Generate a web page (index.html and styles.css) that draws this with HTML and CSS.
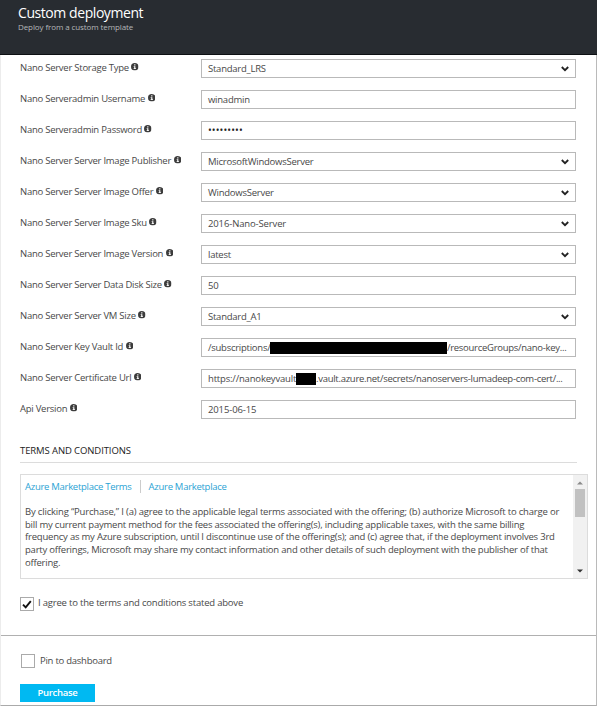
FILE: index.html
```
<!DOCTYPE html>
<html lang="en">
<head>
<meta charset="utf-8">
<title>Custom deployment</title>
<link rel="stylesheet" href="styles.css">
</head>
<body>
<svg width="0" height="0" class="defs">
  <symbol id="info" viewBox="0 0 14 14"><circle cx="7" cy="7" r="7" fill="#3c3c3c"/><path d="M6 2.5h2.2v2H6zM5 6h3.2v4H9.3v1.4H4.9V10H6V7.3H5z" fill="#fff"/></symbol>
  <symbol id="chev" viewBox="0 0 8 6"><path d="M.8 1 4 4.2 7.2 1" fill="none" stroke="#222" stroke-width="1.8"/></symbol>
</svg>
<div class="blade">
  <header class="head">
    <h1>Custom deployment</h1>
    <p>Deploy from a custom template</p>
  </header>
  <main class="form">
    <div class="row"><label>Nano Server Storage Type<svg class="info"><use href="#info"/></svg></label><div class="field"><span>Standard_LRS</span><svg class="chev"><use href="#chev"/></svg></div></div>
    <div class="row"><label>Nano Serveradmin Username<svg class="info"><use href="#info"/></svg></label><div class="field"><span>winadmin</span></div></div>
    <div class="row"><label>Nano Serveradmin Password<svg class="info"><use href="#info"/></svg></label><div class="field"><span class="dots">•••••••••</span></div></div>
    <div class="row"><label>Nano Server Server Image Publisher<svg class="info"><use href="#info"/></svg></label><div class="field"><span>MicrosoftWindowsServer</span><svg class="chev"><use href="#chev"/></svg></div></div>
    <div class="row"><label>Nano Server Server Image Offer<svg class="info"><use href="#info"/></svg></label><div class="field"><span>WindowsServer</span><svg class="chev"><use href="#chev"/></svg></div></div>
    <div class="row"><label>Nano Server Server Image Sku<svg class="info"><use href="#info"/></svg></label><div class="field"><span class="digits">2016-Nano-Server</span><svg class="chev"><use href="#chev"/></svg></div></div>
    <div class="row"><label>Nano Server Server Image Version<svg class="info"><use href="#info"/></svg></label><div class="field"><span>latest</span><svg class="chev"><use href="#chev"/></svg></div></div>
    <div class="row"><label>Nano Server Server Data Disk Size<svg class="info"><use href="#info"/></svg></label><div class="field"><span class="digits">50</span></div></div>
    <div class="row"><label>Nano Server Server VM Size<svg class="info"><use href="#info"/></svg></label><div class="field"><span>Standard_A1</span><svg class="chev"><use href="#chev"/></svg></div></div>
    <div class="row"><label>Nano Server Key Vault Id<svg class="info"><use href="#info"/></svg></label><div class="field"><span class="pre-sub">/subscriptions/</span><i class="mask mask-long"></i><span class="post">/resourceGroups/nano-key...</span></div></div>
    <div class="row"><label>Nano Server Certificate Url<svg class="info"><use href="#info"/></svg></label><div class="field"><span class="pre-url">https://nanokeyvault</span><i class="mask mask-short"></i><span class="post">.vault.azure.net/secrets/nanoservers-lumadeep-com-cert/...</span></div></div>
    <div class="row"><label>Api Version<svg class="info"><use href="#info"/></svg></label><div class="field"><span class="digits">2015-06-15</span></div></div>

    <h2>TERMS AND CONDITIONS</h2>
    <section class="terms">
      <div class="copy">
        <nav><a class="first">Azure Marketplace Terms</a><a>Azure Marketplace</a></nav>
        <p><span class="wide">By clicking “Purchase,” I (a) agree to the applicable legal terms associated with the offering; (b) authorize Microsoft to charge or</span><br>
        bill my current payment method for the fees associated the offering(s), including applicable taxes, with the same billing<br>
        frequency as my Azure subscription, until I discontinue use of the offering(s); and (c) agree that, if the deployment involves 3rd<br>
        party offerings, Microsoft may share my contact information and other details of such deployment with the publisher of that<br>
        offering.</p>
      </div>
      <div class="scroll">
        <svg class="up" viewBox="0 0 6 4"><path d="M0 3.5 3 .5 6 3.5z"/></svg>
        <div class="thumb"></div>
        <svg class="down" viewBox="0 0 6 4"><path d="M0 .5 3 3.5 6 .5z"/></svg>
      </div>
    </section>
    <div class="check agree"><span class="box"><svg viewBox="0 0 10 9"><path d="M1 4.6 3.7 7.4 8.8 1.2" fill="none" stroke="#111" stroke-width="1.9"/></svg></span><span class="check-text">I agree to the terms and conditions stated above</span></div>
  </main>
  <footer class="foot">
    <div class="check pin"><span class="box"></span><span class="check-text">Pin to dashboard</span></div>
    <button class="buy">Purchase</button>
  </footer>
</div>
</body>
</html>
```
FILE: styles.css
```
* { box-sizing: border-box; }
body { margin: 0; background: #fff; color: #484848; font: 9.5px/13px "Open Sans", "Noto Sans", sans-serif; }
.defs { position: absolute; }
.blade { width: 597px; height: 706px; display: flex; flex-direction: column; border-right: 1px solid #bababa; border-left: 1px solid #ececec; border-bottom: 1px solid #aaa; white-space: nowrap; }
.head { height: 55px; margin: 0 -1px; padding: 4px 0 0 18px; background: #282c31; border-bottom: 1px solid #0d1013; color: #fff; }
h1 { margin: 0; font-size: 14px; line-height: 17px; font-weight: 400; letter-spacing: -0.43px; }
.head p { margin: 0; font-size: 8px; line-height: 11px; color: #b5b7b9; letter-spacing: -0.1px; }
.form { height: 580px; padding: 4px 0 0 19px; }
.row { display: flex; height: 31px; }
label { width: 181px; height: 17px; display: flex; align-items: center; letter-spacing: -0.25px; }
.info { width: 7.5px; height: 7.5px; margin: -1px 0 0 2.5px; }
.field { width: 375px; height: 19px; padding: 0 6px; display: flex; align-items: center; border: 1px solid #b9b9b9; letter-spacing: -0.24px; }
.chev { width: 8px; height: 6px; margin: 1px 0 0 auto; }
.digits { letter-spacing: -0.13px; }
.dots { color: #222; font-size: 10px; letter-spacing: 0.1px; }
.pre-sub { width: 62px; letter-spacing: -0.25px; }
.pre-url { width: 88px; letter-spacing: -0.18px; }
.post { letter-spacing: -0.28px; }
.mask { flex: none; background: #000; }
.mask-long { width: 177px; height: 12px; margin-top: 1px; }
.mask-short { width: 20px; height: 12px; }
h2 { width: 557px; height: 19px; margin: 13px 0 11px; border-bottom: 1px solid #dcdcdc; font-size: 9.5px; line-height: 13px; font-weight: 400; color: #222; letter-spacing: -0.1px; }
.terms { width: 568px; height: 105px; display: flex; justify-content: space-between; border: 1px solid #dcdcdc; }
.copy { padding: 5px 0 0 4px; }
nav { display: flex; height: 13px; }
nav a { color: #2ba3d4; letter-spacing: -0.28px; }
nav .first { margin-right: 8px; padding-right: 8px; border-right: 1px solid #ccc; }
.copy p { margin: 13px 0 0; line-height: 12.7px; letter-spacing: -0.21px; }
.wide { letter-spacing: -0.18px; }
.scroll { width: 14px; display: flex; flex-direction: column; align-items: center; background: #f1f1f1; }
.up { width: 6px; height: 4px; margin: 6px 0 4px; fill: #8a8a8a; }
.thumb { width: 10px; height: 28px; background: #c1c1c1; }
.down { width: 6px; height: 4px; margin: auto 0 5px; fill: #333; }
.check { display: flex; align-items: center; letter-spacing: -0.2px; }
.box { width: 14px; height: 14px; display: flex; align-items: center; justify-content: center; border: 1px solid #aaa; }
.box svg { width: 10px; height: 9px; }
.check-text { margin: -2px 0 0 5px; }
.agree { margin-top: 18px; }
.agree .check-text { margin: -3px 0 0 4px; }
.foot { flex: 1; padding: 18px 0 0 19px; border-top: 1px solid #b0b0b0; }
.pin { margin-left: 1px; letter-spacing: -0.25px; }
.buy { display: block; width: 75px; height: 18px; margin-top: 16px; padding: 0; border: 0; background: #00b9f2; color: #fff; font: 600 9.5px/18px "Open Sans", sans-serif; letter-spacing: -0.3px; }
```
